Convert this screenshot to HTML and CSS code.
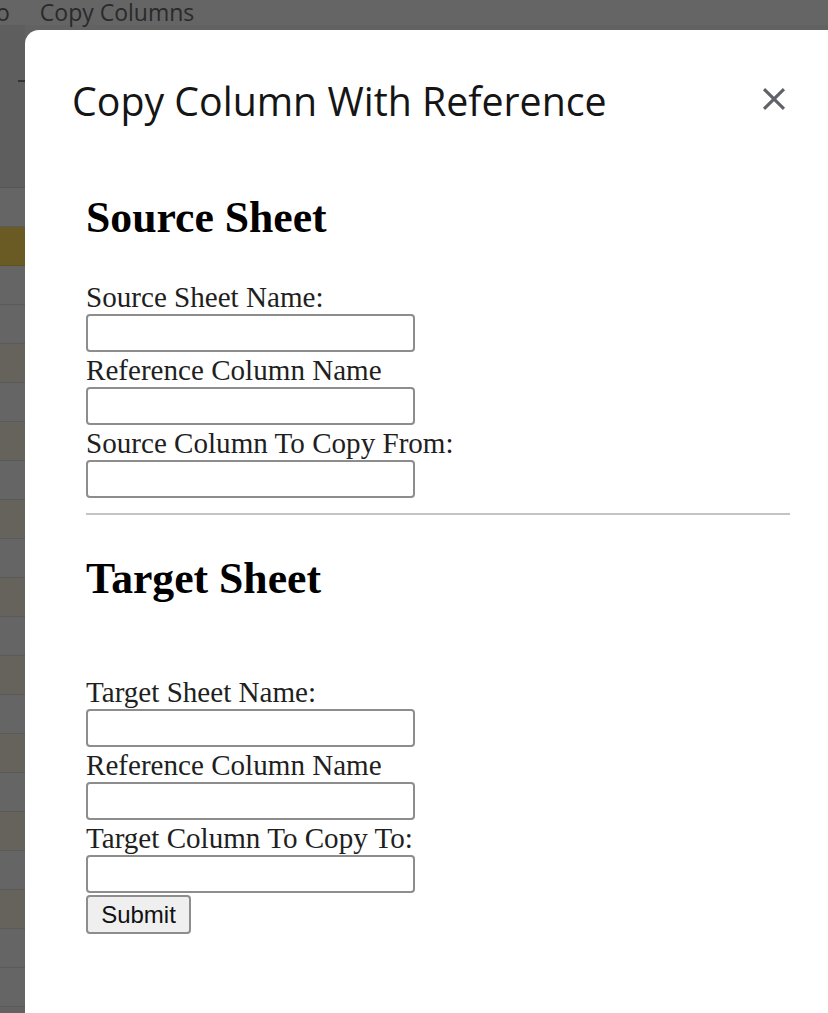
FILE: index.html
```html
<!DOCTYPE html>
<html lang="en">
<head>
<meta charset="utf-8">
<title>Copy Column With Reference</title>
<link rel="stylesheet" href="styles.css">
</head>
<body>
<div class="app">
  <div class="menubar">
    <span class="menu-item menu-cut">o</span>
    <span class="menu-item">Copy Columns</span>
  </div>
  <div class="workspace">
    <div class="toolbar-strip"><span class="tick"></span></div>
    <div class="row"></div>
    <div class="row row-hl"></div>
    <div class="row"></div>
    <div class="row"></div>
    <div class="row row-warm"></div>
    <div class="row"></div>
    <div class="row row-warm"></div>
    <div class="row"></div>
    <div class="row row-warm"></div>
    <div class="row"></div>
    <div class="row row-warm"></div>
    <div class="row"></div>
    <div class="row row-warm"></div>
    <div class="row"></div>
    <div class="row row-warm"></div>
    <div class="row"></div>
    <div class="row row-warm"></div>
    <div class="row"></div>
    <div class="row row-warm"></div>
    <div class="row"></div>
    <div class="row"></div>
  </div>
</div>

<div class="dialog">
  <div class="dialog-header">
    <h1 class="dialog-title">Copy Column With Reference</h1>
    <button class="close-btn" aria-label="Close">
      <svg viewBox="0 0 24 24" width="38" height="38"><path d="M19 6.41L17.59 5 12 10.59 6.41 5 5 6.41 10.59 12 5 17.59 6.41 19 12 13.41 17.59 19 19 17.59 13.41 12z" fill="#5f6368"/></svg>
    </button>
  </div>
  <form class="dialog-body">
    <h2 class="section-title">Source Sheet</h2>
    <label class="field-label">Source Sheet Name:</label>
    <input class="field-input" type="text">
    <label class="field-label">Reference Column Name</label>
    <input class="field-input" type="text">
    <label class="field-label">Source Column To Copy From:</label>
    <input class="field-input" type="text">
    <hr class="divider">
    <h2 class="section-title section-title-spaced">Target Sheet</h2>
    <label class="field-label">Target Sheet Name:</label>
    <input class="field-input" type="text">
    <label class="field-label">Reference Column Name</label>
    <input class="field-input" type="text">
    <label class="field-label">Target Column To Copy To:</label>
    <input class="field-input" type="text">
    <button type="button" class="submit-btn">Submit</button>
  </form>
</div>
</body>
</html>
```

FILE: styles.css
```css
html, body {
  margin: 0;
  padding: 0;
}

body {
  width: 828px;
  height: 1013px;
  overflow: hidden;
  background: #626262;
  position: relative;
}

.app {
  display: flex;
  flex-direction: column;
  height: 100%;
}

.menubar {
  height: 25px;
  display: flex;
  align-items: flex-end;
  gap: 30px;
  background: #656565;
  font-family: "Open Sans", sans-serif;
  font-size: 23px;
  line-height: 25px;
  color: #2a2a2a;
  margin-top: -4px;
  padding-top: 4px;
}

.menu-item {
  white-space: nowrap;
}

.menu-cut {
  margin-left: -4px;
}

.workspace {
  display: flex;
  flex-direction: column;
  flex: 1;
  width: 25px;
}

.toolbar-strip {
  height: 162px;
  background: #5e5e5e;
  border-bottom: 1px solid #555;
  position: relative;
}

.tick {
  position: absolute;
  left: 18px;
  top: 55px;
  width: 7px;
  height: 2px;
  background: #333;
}

.row {
  height: 38px;
  background: #656565;
  border-bottom: 1px solid #5a5a5a;
  flex: none;
}

.row-hl {
  background: #6a5a24;
  border-bottom-color: #5f5222;
}

.row-warm {
  background: #66635c;
}

.dialog {
  position: absolute;
  left: 25px;
  top: 30px;
  width: 840px;
  height: 1010px;
  background: #ffffff;
  border-top-left-radius: 14px;
  box-sizing: border-box;
  padding: 52px 0 0 47px;
}

.dialog-header {
  display: flex;
  align-items: flex-start;
  width: 730px;
  position: relative;
}

.dialog-title {
  margin: 0;
  font-family: "Open Sans", sans-serif;
  font-weight: 400;
  font-size: 39.3px;
  line-height: 39px;
  color: #151515;
  letter-spacing: 0;
  flex: 1;
}

.close-btn {
  position: absolute;
  left: 683px;
  top: -2px;
  border: 0;
  background: transparent;
  padding: 0;
  width: 38px;
  height: 38px;
  display: block;
}

.close-btn svg {
  display: block;
}

.dialog-body {
  padding: 74px 0 0 14px;
  display: flex;
  flex-direction: column;
  align-items: flex-start;
  font-family: "Liberation Serif", "Times New Roman", serif;
  color: #1a1a1a;
}

.section-title {
  margin: 0 0 43px 0;
  font-family: "Liberation Serif", "Times New Roman", serif;
  font-weight: 700;
  font-size: 43.7px;
  line-height: 44px;
  color: #000;
}

.section-title-spaced {
  margin-bottom: 77px;
}

.field-label {
  font-size: 29.1px;
  line-height: 31px;
  color: #1f1f1f;
  white-space: nowrap;
}

.field-input {
  display: block;
  box-sizing: border-box;
  width: 329px;
  height: 38px;
  margin: 1px 0 3px 0;
  border: 2px solid #8d8d8d;
  border-radius: 4px;
  background: #fff;
  padding: 0 4px;
  font-size: 24px;
}

.divider {
  align-self: stretch;
  width: 704px;
  margin: 12px 0 41px 0;
  border: 0;
  height: 2px;
  background: #c4c4c4;
}

.submit-btn {
  box-sizing: border-box;
  width: 105px;
  height: 39px;
  margin-top: -1px;
  border: 2px solid #8d8d8d;
  border-radius: 4px;
  background: #efefef;
  font-family: "Liberation Sans", Arial, sans-serif;
  font-size: 24px;
  color: #111;
  padding: 0;
}
```
